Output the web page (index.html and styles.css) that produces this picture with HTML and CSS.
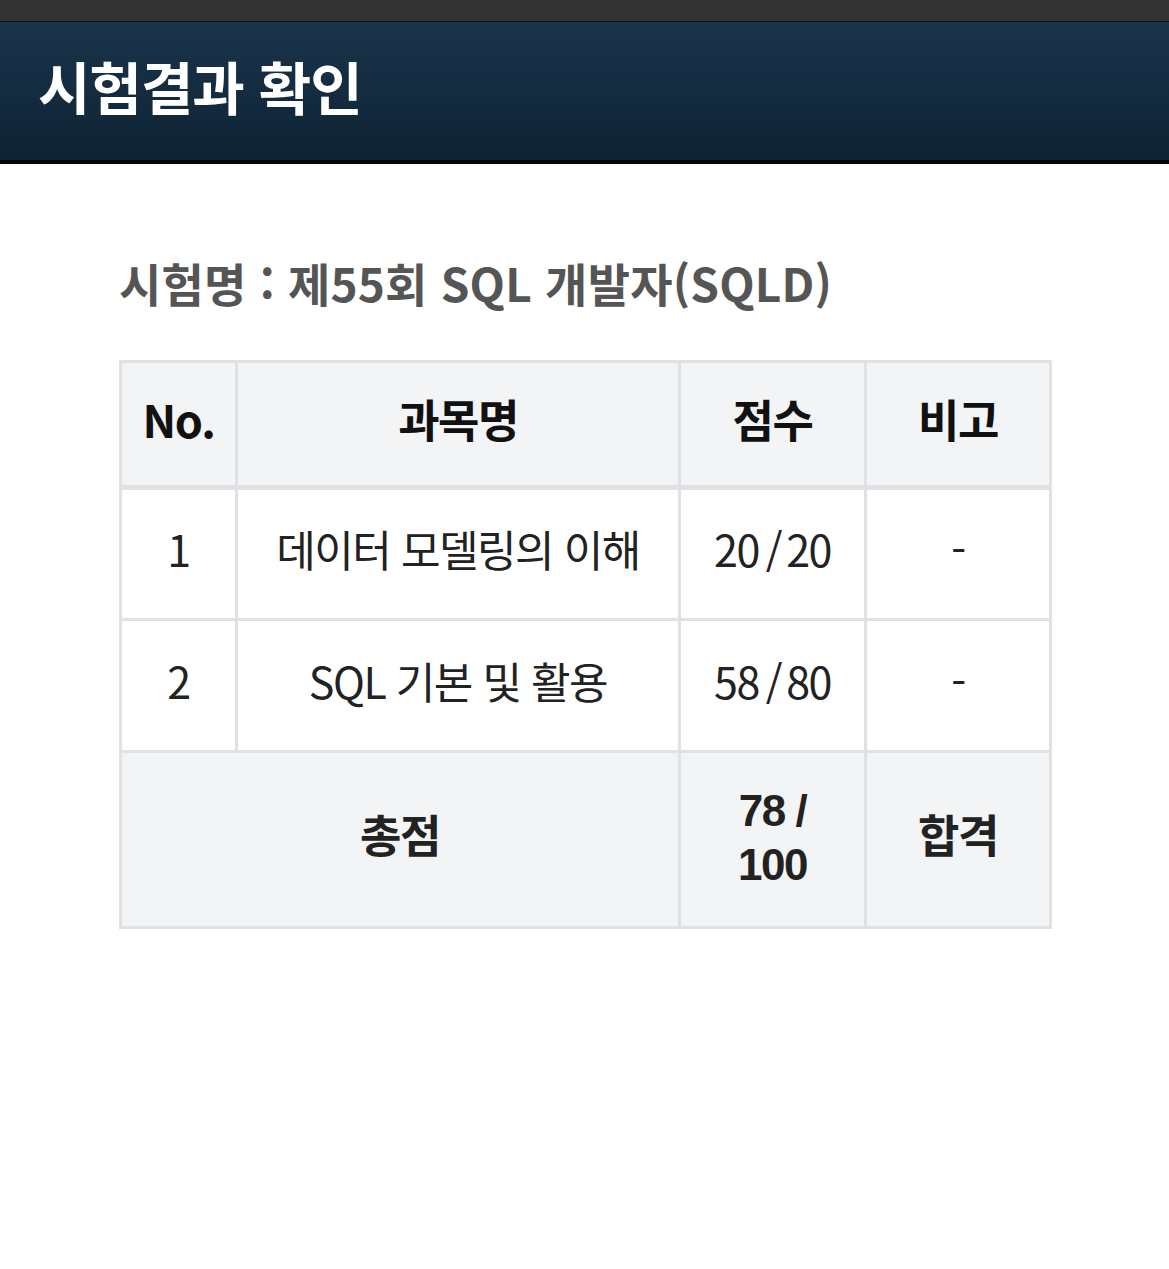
FILE: index.html
```html
<!DOCTYPE html>
<html lang="ko">
<head>
<meta charset="utf-8">
<link rel="stylesheet" href="styles.css">
</head>
<body>
<div class="topstrip"></div>
<header class="pagehead">
  <h1 class="pagetitle">시험결과 확인</h1>
</header>
<main class="content">
  <h2 class="examname">시험명 : 제55회 SQL 개발자(SQLD)</h2>
  <table class="result">
    <colgroup>
      <col class="c-no"><col class="c-subj"><col class="c-score"><col class="c-note">
    </colgroup>
    <thead>
      <tr class="head-row">
        <th>No.</th><th>과목명</th><th>점수</th><th>비고</th>
      </tr>
    </thead>
    <tbody>
      <tr class="data-row">
        <td>1</td><td>데이터 모델링의 이해</td><td>20<span class="sl">/</span>20</td><td>-</td>
      </tr>
      <tr class="data-row">
        <td>2</td><td>SQL 기본 및 활용</td><td>58<span class="sl">/</span>80</td><td>-</td>
      </tr>
      <tr class="total-row">
        <th colspan="2">총점</th>
        <th class="total-score"><span class="tline">78 /</span><span class="tline">100</span></th>
        <th>합격</th>
      </tr>
    </tbody>
  </table>
</main>
</body>
</html>
```

FILE: styles.css
```css
html, body {
  margin: 0;
  padding: 0;
  background: #ffffff;
  font-family: "Noto Sans CJK KR", "Noto Sans", sans-serif;
}
.topstrip {
  height: 21px;
  background: #333333;
  border-bottom: 1px solid #111;
}
.pagehead {
  height: 138px;
  background: linear-gradient(to bottom, #1a344b 0%, #132a3e 60%, #0f2232 100%);
  border-bottom: 4px solid #050607;
  display: flex;
  align-items: center;
  padding-left: 38px;
}
.pagetitle {
  margin: 0;
  color: #ffffff;
  font-size: 57px;
  font-weight: 700;
  letter-spacing: -1px;
  line-height: 1;
  padding-bottom: 12px;
}
.content {
  padding: 88px 118px 0 119px;
}
.examname {
  margin: 0 0 48px 0;
  color: #555555;
  font-size: 46px;
  font-weight: 700;
  letter-spacing: 0.2px;
  line-height: 60px;
}
.result {
  width: 930px;
  border-collapse: collapse;
  border: 3px solid #dfe1e4;
  table-layout: fixed;
}
.c-no { width: 116px; }
.c-subj { width: 443px; }
.c-score { width: 186px; }
.c-note { width: 185px; }
.result th, .result td {
  border: 3px solid #dfe1e4;
  text-align: center;
  vertical-align: middle;
  letter-spacing: -1.5px;
  padding: 0 0 12px 0;
}
.result th {
  background: #f3f4f6;
  color: #111111;
  font-weight: 700;
  font-size: 45px;
}
.result td {
  color: #222222;
  font-weight: 400;
  font-size: 43px;
  background: #ffffff;
}
.sl {
  margin: 0 5px 0 7px;
}
.head-row { height: 126px; }
.head-row th { border-bottom-width: 5px; }
.data-row { height: 132px; }
.total-row { height: 176px; }
.total-row th { color: #222222; }
.result .total-score { padding: 0 0 4px 0; }
.tline {
  display: block;
  height: 54px;
  line-height: 54px;
  font-family: "Liberation Sans", "Noto Sans", sans-serif;
  font-size: 44px;
  letter-spacing: -1.5px;
}
```
